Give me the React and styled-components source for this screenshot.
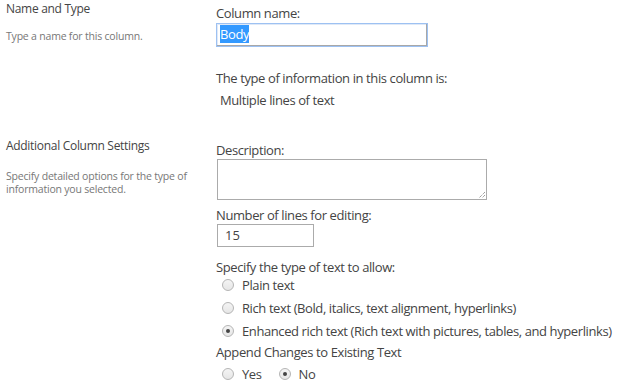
import styled, { createGlobalStyle } from "styled-components";

const GlobalStyle = createGlobalStyle`
  body {
    margin: 0;
    background: #fff;
    font-family: "Open Sans", "Noto Sans", sans-serif;
    color: #444;
  }
`;

const textTypes = [
  { id: "plain", label: "Plain text" },
  { id: "rich", label: "Rich text (Bold, italics, text alignment, hyperlinks)" },
  {
    id: "enhanced",
    label: "Enhanced rich text (Rich text with pictures, tables, and hyperlinks)",
  },
];

const App = () => {
  return (
    <Page>
      <GlobalStyle />
      <Section>
        <Info>
          <Heading>Name and Type</Heading>
          <Help>Type a name for this column.</Help>
        </Info>
        <Fields>
          <Label>Column name:</Label>
          <NameBox>
            <Selected>Body</Selected>
          </NameBox>
          <Label $top={18}>The type of information in this column is:</Label>
          <Value>Multiple lines of text</Value>
        </Fields>
      </Section>

      <Section $top={28}>
        <Info>
          <Heading>Additional Column Settings</Heading>
          <Help $top={16}>
            Specify detailed options for the type of information you selected.
          </Help>
        </Info>
        <Fields>
          <Label>Description:</Label>
          <TextArea>
            <Grip viewBox="0 0 9 9">
              <path d="M8 2 L2 8 M8 5 L5 8" stroke="#777" strokeWidth="1" strokeDasharray="1 1" />
            </Grip>
          </TextArea>
          <Label $top={2}>Number of lines for editing:</Label>
          <SmallBox>15</SmallBox>
          <Label $top={7}>Specify the type of text to allow:</Label>
          <Options>
            {textTypes.map((t) => (
              <Option key={t.id}>
                <Radio $checked={t.id === "enhanced"} />
                {t.label}
              </Option>
            ))}
          </Options>
          <Label $top={-3}>Append Changes to Existing Text</Label>
          <InlineOptions>
            <Option>
              <Radio />
              Yes
            </Option>
            <Option>
              <Radio $checked />
              No
            </Option>
          </InlineOptions>
        </Fields>
      </Section>
    </Page>
  );
};

const Page = styled.div`
  width: 617px;
  height: 390px;
  overflow: hidden;
`;

const Section = styled.div`
  display: grid;
  grid-template-columns: 216px 1fr;
  margin-top: ${(p) => p.$top || 0}px;
`;

const Info = styled.div`
  padding-left: 6px;
  padding-right: 20px;
`;

const Heading = styled.div`
  padding-top: 1px;
  font-size: 12px;
  line-height: 16px;
  color: #444;
  letter-spacing: -0.3px;
`;

const Help = styled.div`
  margin-top: ${(p) => p.$top || 13}px;
  font-size: 10.5px;
  line-height: 13px;
  color: #777;
  letter-spacing: -0.2px;
`;

const Fields = styled.div`
  display: flex;
  flex-direction: column;
  align-items: flex-start;
`;

const Label = styled.div`
  margin-top: ${(p) => p.$top || 0}px;
  padding-top: 4px;
  font-size: 13px;
  line-height: 18px;
  color: #444;
  letter-spacing: -0.4px;
`;

const Value = styled.div`
  margin-top: 4px;
  padding-left: 4px;
  font-size: 13px;
  line-height: 18px;
  color: #444;
  letter-spacing: -0.4px;
`;

const NameBox = styled.div`
  box-sizing: border-box;
  width: 212px;
  height: 24px;
  margin-top: 1px;
  border: 1px solid #9dc1f2;
  box-shadow: inset -1px -1px 0 #a8a8a8, inset 1px 1px 0 #dfe9f7;
  padding: 2px 0 0 3px;
  font-size: 13px;
  line-height: 17px;
  letter-spacing: -0.4px;
`;

const Selected = styled.span`
  background: #3399ff;
  color: #fff;
`;

const TextArea = styled.div`
  position: relative;
  box-sizing: border-box;
  width: 270px;
  height: 41px;
  margin-left: 1px;
  border: 1px solid #ababab;
`;

const Grip = styled.svg`
  position: absolute;
  right: 0;
  bottom: 0;
  width: 9px;
  height: 9px;
`;

const SmallBox = styled.div`
  box-sizing: border-box;
  width: 97px;
  height: 23px;
  margin-left: 1px;
  border: 1px solid #ababab;
  padding: 2px 0 0 7px;
  font-size: 13px;
  line-height: 17px;
  color: #444;
`;

const Options = styled.div`
  display: flex;
  flex-direction: column;
  margin-top: -3px;
`;

const InlineOptions = styled.div`
  display: flex;
  gap: 11px;
  margin-top: 1px;
`;

const Option = styled.div`
  display: flex;
  align-items: center;
  height: 23px;
  padding-left: 6px;
  font-size: 13px;
  color: #444;
  letter-spacing: -0.4px;
  white-space: nowrap;
`;

const Radio = styled.span`
  position: relative;
  box-sizing: border-box;
  width: 12px;
  height: 12px;
  margin-right: 8px;
  border-radius: 50%;
  border: 1px solid #b5b5b5;
  background: linear-gradient(#f4f4f4, #e6e6e6);
  flex-shrink: 0;
  &::after {
    content: "";
    display: ${(p) => (p.$checked ? "block" : "none")};
    position: absolute;
    left: 3px;
    top: 3px;
    width: 4px;
    height: 4px;
    border-radius: 50%;
    background: #444;
  }
`;

export default App;
